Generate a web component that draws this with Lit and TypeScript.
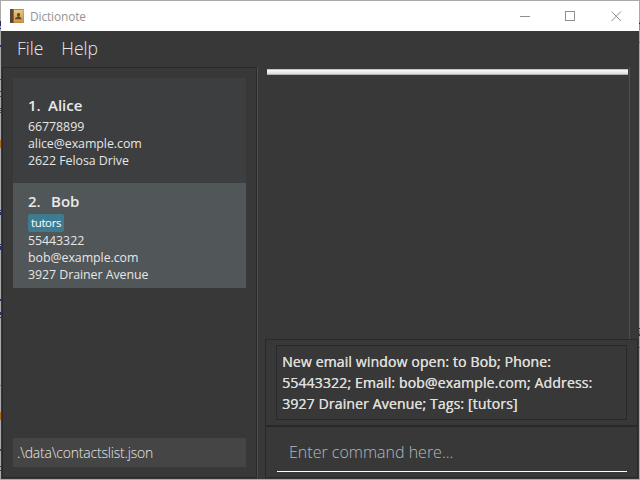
import { LitElement, html, css, svg, nothing } from "lit";
import { customElement } from "lit/decorators.js";

interface Contact {
  name: string;
  phone: string;
  email: string;
  address: string;
  tags: string[];
}

const contacts: Contact[] = [
  { name: "Alice", phone: "66778899", email: "alice@example.com", address: "2622 Felosa Drive", tags: [] },
  { name: "Bob", phone: "55443322", email: "bob@example.com", address: "3927 Drainer Avenue", tags: ["tutors"] },
];

// Slivers of the desktop visible beside the window: [top, height, colour].
type Mark = [number, number, string];
const leftMarks: Mark[] = [
  [21, 5, "#2b2b6b"], [28, 1, "#2b2b6b"], [45, 2, "#2b2b6b"], [79, 1, "#444"], [91, 1, "#444"],
  [96, 1, "#444"], [108, 1, "#444"], [110, 1, "#444"], [112, 1, "#444"], [140, 8, "#b0681c"],
  [210, 1, "#2b2b6b"], [212, 3, "#2b2b6b"], [244, 1, "#2b2b6b"], [246, 4, "#2b2b6b"],
  [299, 2, "#2b2b6b"], [312, 3, "#2b2b6b"], [317, 1, "#2b2b6b"], [385, 1, "#b0681c"],
  [412, 8, "#b0681c"], [449, 2, "#444"], [466, 1, "#444"], [470, 1, "#444"],
];
const rightMarks: Mark[] = [
  [21, 2, "#b08a58"], [23, 1, "#222"], [24, 6, "#b08a58"], [42, 1, "#8a7a50"],
  [328, 1, "#333"], [331, 1, "#a06040"], [333, 2, "#456a80"], [335, 1, "#333"], [347, 1, "#8a7a50"],
];

@customElement("title-bar")
class TitleBar extends LitElement {
  static styles = css`
    :host { display: flex; height: 30px; background: #fff; align-items: center; }
    .logo { margin-left: 9px; width: 14px; height: 14px; flex: none; }
    .title { margin-left: 6px; flex: 1; font-size: 11.9px; line-height: 28px; color: #949494; letter-spacing: -0.12px; }
    .btn { width: 45px; height: 30px; display: flex; align-items: center; justify-content: center; }
    .btn:last-child { width: 47px; }
    svg { display: block; }
    .btn svg { width: 12px; height: 12px; fill: none; stroke: #8f8f8f; }
  `;
  render() {
    return html`
      <svg class="logo" viewBox="0 0 14 14">
        <defs>
          <linearGradient id="cover" x1="0" y1="0" x2="0" y2="1">
            <stop offset="0" stop-color="#eac683" />
            <stop offset="1" stop-color="#cf963d" />
          </linearGradient>
        </defs>
        <rect width="14" height="14" rx="0.7" fill="#b98b47" />
        <rect x="4" y="1" width="9.4" height="12" fill="url(#cover)" />
        <rect width="3.5" height="14" rx="0.5" fill="#574638" />
        <rect x="3" width="1" height="14" fill="#8c6b3f" />
        <path d="M8.500 4a1.600 1.600 0 0 1 .9 2.900v1.100l1.900.7v1.500H5.200V8.700l2.400-.7V6.900A1.600 1.600 0 0 1 8.500 4z" fill="#57452f" />
      </svg>
      <div class="title">Dictionote</div>
      ${[
        svg`<path d="M1 6.500h10" />`,
        svg`<rect x="1.500" y="1.500" width="9" height="9" />`,
        svg`<path d="M1.500 1.500l9.500 9.500M11 1.500L1.500 11" />`,
      ].map((g) => html`<div class="btn"><svg viewBox="0 0 12 12">${g}</svg></div>`)}
    `;
  }
}

@customElement("contact-card")
class ContactCard extends LitElement {
  static properties = { contact: { attribute: false }, index: { type: Number } };
  declare contact: Contact;
  declare index: number;
  static styles = css`
    :host { display: block; box-sizing: border-box; height: 105px; padding: 17px 15px 0; background: #3c3e3f; }
    :host([selected]) { background: #515658; padding-top: 8px; }
    .name { display: flex; font-size: 15px; font-weight: 600; line-height: 20px; height: 23px; color: #e9e9e9; letter-spacing: 0; }
    .num { width: 20px; }
    :host([selected]) .num { width: 23px; }
    .tags { display: flex; height: 18px; }
    .tag { padding: 0 3px; border-radius: 2px; background: #3e7b91; color: #fff; font-size: 11.5px; line-height: 17px; letter-spacing: -0.38px; }
    .line { font-size: 12.4px; line-height: 17px; height: 17px; color: #e6e6e6; letter-spacing: -0.06px; white-space: nowrap; }
  `;
  render() {
    const c = this.contact;
    return html`
      <div class="name"><span class="num">${this.index}.</span><span>${c.name}</span></div>
      ${c.tags.length
        ? html`<div class="tags">${c.tags.map((t) => html`<span class="tag">${t}</span>`)}</div>`
        : nothing}
      <div class="line">${c.phone}</div>
      <div class="line">${c.email}</div>
      <div class="line">${c.address}</div>
    `;
  }
}

@customElement("app-root")
class AppRoot extends LitElement {
  static styles = css`
    :host {
      display: flex; width: 640px; height: 480px; box-sizing: border-box; overflow: hidden;
      background: #a9a9a9; font-family: "Open Sans", "Noto Sans", sans-serif;
    }
    * { box-sizing: border-box; }
    .edge { width: 1px; height: 480px; flex: none; background: #a9a9a9; }
    .edge svg { display: block; width: 1px; height: 480px; }
    .window { flex: 1; height: 478px; margin-top: 1px; display: flex; flex-direction: column; background: #383838; }
    title-bar { flex: none; }
    .menu { height: 36px; flex: none; display: flex; gap: 18px; padding-left: 16px; font-size: 17.5px; line-height: 35px; font-weight: 300; color: #e8e8e8; }
    .main { flex: 1; display: flex; min-height: 0; padding: 0 1px 1px; }
    .left { width: 255px; display: flex; flex-direction: column; padding: 10px 10px 10px 10px; border: 1px solid #292929; }
    .divider { width: 1px; background: #505050; }
    .path { margin-top: auto; height: 29px; padding-left: 4px; background: #454545; color: #e8e8e8; font-size: 14px; font-weight: 300; line-height: 29px; letter-spacing: -0.2px; }
    .right { flex: 1; display: flex; flex-direction: column; padding-left: 7px; }
    .view { height: 272px; margin: 0 8px 0 2px; padding: 2px 1px 0 0; border-right: 1px solid #505050; }
    .bar { height: 6px; background: linear-gradient(#c4c4c4 0 1px, #fafafa 1px, #dcdcdc 5px, #b0b0b0 5px); }
    .result { height: 87px; padding: 5px 10px; border: 1px solid #292929; }
    .message { height: 75px; padding: 5px 5px; border: 1px solid #292929; color: #dededa; font-size: 14px; line-height: 21px; letter-spacing: 0.15px; white-space: pre; text-shadow: 0.4px 0 0 #dededa; }
    .command { flex: 1; padding: 8px 10px 0 11px; border: 1px solid #292929; }
    .input { height: 37px; border-bottom: 1px solid #fff; padding-left: 12px; font-size: 16px; font-weight: 300; line-height: 34px; color: #b2b8bd; }
  `;
  edge(marks: Mark[]) {
    return html`<div class="edge"><svg viewBox="0 0 1 480">${marks.map(
      ([y, h, fill]) => svg`<rect y=${y} width="1" height=${h} fill=${fill} />`,
    )}</svg></div>`;
  }
  render() {
    return html`
      ${this.edge(leftMarks)}
      <div class="window">
        <title-bar></title-bar>
        <nav class="menu"><span>File</span><span>Help</span></nav>
        <div class="main">
          <section class="left">
            ${contacts.map((c, i) => html`<contact-card .contact=${c} .index=${i + 1} ?selected=${i === 1}></contact-card>`)}
            <div class="path">.\\data\\contactslist.json</div>
          </section>
          <div class="divider"></div>
          <section class="right">
            <div class="view"><div class="bar"></div></div>
            <div class="result"><div class="message">${"New email window open: to Bob; Phone:\n55443322; Email: bob@example.com; Address:\n3927 Drainer Avenue; Tags: [tutors]"}</div></div>
            <div class="command"><div class="input">Enter command here...</div></div>
          </section>
        </div>
      </div>
      ${this.edge(rightMarks)}
    `;
  }
}
